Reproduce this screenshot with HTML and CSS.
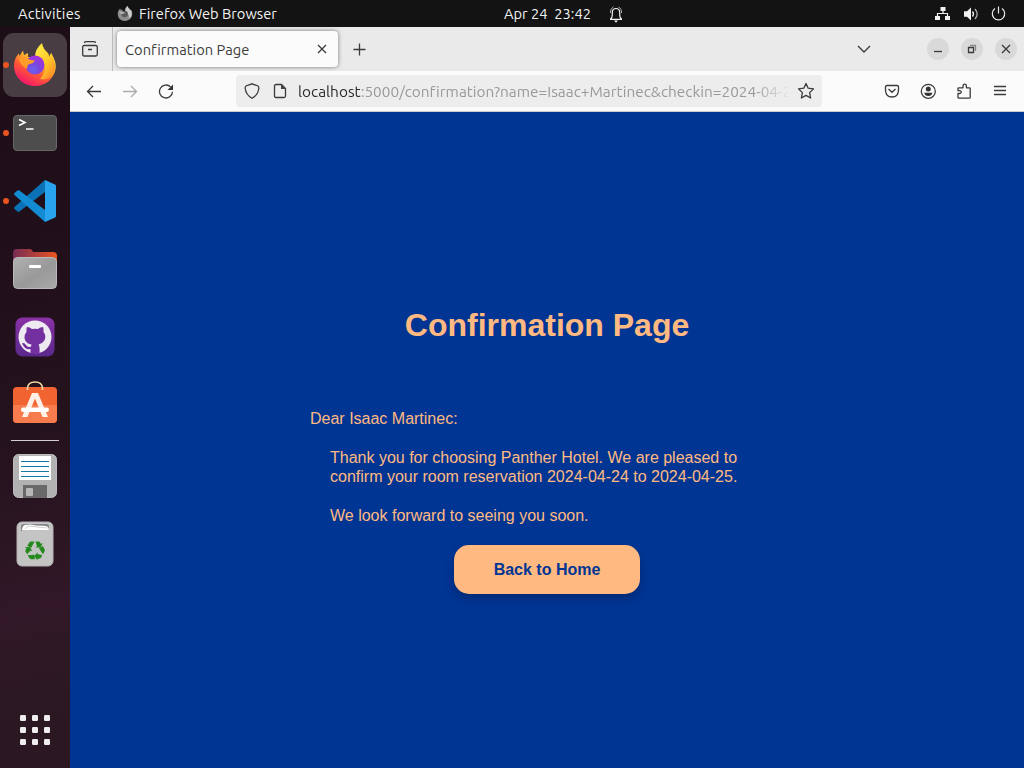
FILE: index.html
```
<!DOCTYPE html>
<html lang="en">
<head>
<meta charset="utf-8">
<title>Confirmation Page</title>
<link rel="stylesheet" href="styles.css">
</head>
<body>
<div class="desktop">
  <header class="topbar">
    <div class="top-left">
      <span class="activities">Activities</span>
      <svg class="app-icon" width="16" height="16" viewBox="0 0 42 44"><path d="M21 41C9 41 1 33 1 22C1 16 3 11 8 7L9 12L14 9L14 14H21C21 7 23 3 28 0C29 5 34 7 36 11L38 10C46 25 37 41 21 41Z" fill="#8d8d8d"/><path d="M22 13Q22 4 28 0Q29 5 34 9L38 13Q43 28 33 34Q33 23 22 13Z" fill="#ccc"/><circle cx="20" cy="22" r="9" fill="#5b5b5b"/><path d="M5 17Q12 14 21 18Q18 22 14 22Q10 23 5 17" fill="#b5b5b5"/></svg>
      <span class="app-name">Firefox Web Browser</span>
    </div>
    <div class="clock"><span class="date">Apr 24&nbsp; 23:42</span>
      <svg width="16" height="18" viewBox="0 0 16 18" fill="none" stroke="#f2f2f2"><path stroke-width="1.2" d="M2 14.300H14M2.500 14Q4.300 12.500 4.300 10V7.500Q4.500 3.500 8 3.500Q11.500 3.500 11.700 7.500V10Q11.700 12.500 13.500 14"/><path stroke="#bbb" d="M2.300 8Q2.300 3.500 5.500 1.800M13.700 8Q13.700 3.500 10.500 1.800"/><path d="M6 15.500H10L8 17.800Z" fill="#f2f2f2" stroke="none"/></svg>
    </div>
    <div class="system">
      <svg width="16" height="16" viewBox="0 0 16 16"><path d="M5.500 1H10.500V5H5.500ZM0 10H5V14H0ZM10 10H15V14H10Z" fill="#f2f2f2"/><path d="M8 5V7.500M2.500 10V7.500H12.500V10" fill="none" stroke="#f2f2f2" stroke-width="1.2"/></svg>
      <svg width="16" height="16" viewBox="0 0 16 16"><path d="M1 5.300H4L8 1.500V14.500L4 10.800H1Z" fill="#f2f2f2"/><path d="M9.500 5.500Q11.500 8 9.500 10.500" fill="none" stroke="#f2f2f2" stroke-width="1.3"/><path d="M12 3Q16.300 8 12 13" fill="none" stroke="#aaa" stroke-width="1.3"/></svg>
      <svg width="16" height="16" viewBox="0 0 16 16" fill="none" stroke="#e8e8e8" stroke-width="1.2"><path d="M4 2.600A6.200 6.200 0 1 0 11 2.600M7.500 .5V7.500"/></svg>
    </div>
  </header>

  <div class="workspace">
    <nav class="dock">
      <div class="tile active running">
        <svg width="44" height="46" viewBox="0 0 44 46">
          <defs>
            <linearGradient id="fox" x1=".85" y1=".05" x2=".25" y2=".95"><stop offset="0" stop-color="#fff44f"/><stop offset=".35" stop-color="#ffb52b"/><stop offset=".62" stop-color="#ff5a35"/><stop offset="1" stop-color="#f5156c"/></linearGradient>
            <linearGradient id="tail" x1="0" y1="0" x2=".8" y2="1"><stop offset="0" stop-color="#fff34e"/><stop offset=".6" stop-color="#ffc928"/><stop offset="1" stop-color="#ff8a2a"/></linearGradient>
            <radialGradient id="globe" cx=".4" cy=".75" r=".7"><stop offset="0" stop-color="#6b62f0"/><stop offset=".5" stop-color="#7a45dc"/><stop offset="1" stop-color="#a433dc"/></radialGradient>
          </defs>
          <path d="M22 44C10 44 1 35 1 23.500C1 18 3 14 6 11.500L6.500 14L10 8.500L11 13L15 11V15L24 15L36 16L38 11Q43 19 42.800 25C42 36 33 44 22 44Z" fill="url(#fox)"/>
          <path d="M22 15Q22 7 29 1Q30 7 35 11L37 15L38 11Q45 24 40 32Q35 39 27 37Q35 28 30 20Q27 15 22 15Z" fill="url(#tail)"/>
          <circle cx="22" cy="23" r="9.500" fill="url(#globe)"/>
          <path d="M6 17Q9 13.500 14 16Q17 18.500 22 18.500Q20 22 16 22Q14 23.500 14 27Q7 23 6 17Z" fill="#ff9b29"/>
        </svg>
      </div>
      <div class="tile running">
        <svg width="46" height="38" viewBox="0 0 46 38"><rect x="1.500" y="1.500" width="43" height="35" rx="3.500" fill="#4d4d4d" stroke="#686868"/><path d="M7 5.500L13 8.500L7 11.500M14 15H21.500" fill="none" stroke="#fff" stroke-width="1.600"/></svg>
      </div>
      <div class="tile running">
        <svg width="44" height="44" viewBox="0 0 44 44"><path d="M1.500 28Q.5 29 1.500 30L4.500 32.500Q5.500 33 6.500 32.500L32 13V1Z" fill="#0a72b5"/><path d="M1.500 16Q.5 15 1.500 14L4.500 11.500Q5.500 11 6.500 11.500L32 31V43Z" fill="#138bd2"/><path d="M32 1L42 5.500Q43 6 43 7V37Q43 38 42 38.500L32 43Z" fill="#28a3ee"/></svg>
      </div>
      <div class="tile">
        <svg width="46" height="42" viewBox="0 0 46 42">
          <defs><linearGradient id="folder"><stop stop-color="#762b55"/><stop offset="1" stop-color="#e95420"/></linearGradient><linearGradient id="metal" x2="1" y2="1"><stop stop-color="#b0b0b0"/><stop offset=".55" stop-color="#999"/><stop offset="1" stop-color="#a9a9a9"/></linearGradient></defs>
          <path d="M1 20V5Q1 1 5 1H18Q20 1 21 4H41Q45 4 45 8V20Z" fill="url(#folder)"/><rect x="1.500" y="9.500" width="43" height="31" rx="4" fill="url(#metal)" stroke="#b9b9b9"/><rect x="17" y="17" width="12" height="3" rx="1" fill="#fff"/></svg>
      </div>
      <div class="tile">
        <svg width="40" height="40" viewBox="0 0 40 40"><defs><linearGradient id="hub" x2="0" y2="1"><stop stop-color="#8a31a7"/><stop offset="1" stop-color="#5a288a"/></linearGradient></defs><rect x=".5" y=".5" width="39" height="39" rx="7" fill="url(#hub)"/><circle cx="20" cy="20" r="16.500" fill="#eeeaf2"/><path d="M12 10Q15 10 17 12Q20 11.300 23 12Q25 10 28 10Q29 12 28.500 15Q32 19 29 24Q27 27 23.500 27.500Q25 29 24.500 37H15.500V32Q10 33 8 28Q6 26 8 26Q10 26 11 28Q13 31 16 29.500L16.500 27.500Q12 27 10 23Q8.500 18 11.500 15Q11 12 12 10Z" fill="#7430a0"/></svg>
      </div>
      <div class="tile store">
        <svg width="46" height="44" viewBox="0 0 46 44"><rect x="1" y="7" width="44" height="36" rx="4" fill="#f26332"/><path d="M1 25H45V39Q45 43 41 43H5Q1 43 1 39Z" fill="#f67b4d"/><path d="M15.500 10V8Q16 2 23 2Q30 2 30.500 8V10" fill="none" stroke="#f6d9a4" stroke-width="1.600"/><path d="M20 13H26L36 37H30.500L23 18.500L15.500 37H10Z" fill="#fff0e7"/><rect x="9" y="27.500" width="28" height="4.500" rx="2.200" fill="#fff"/></svg>
      </div>
      <div class="divider"></div>
      <div class="tile">
        <svg width="46" height="46" viewBox="0 0 46 46"><rect x="1.500" y="1.500" width="43" height="43" rx="5" fill="#b2b2b2" stroke="#bcbcbc"/><path d="M7 3H39V27H7Z" fill="#fff"/><path d="M9 8.500H37M9 13.500H37M9 18.500H37M9 23.500H37" stroke="#1278a5"/><path d="M11 32H35V45H11Z" fill="#696969"/><rect x="14" y="35" width="7" height="8" rx="1" fill="#b7b7b7"/></svg>
      </div>
      <div class="tile">
        <svg width="38" height="46" viewBox="0 0 38 46"><rect x="1" y="1" width="36" height="44" rx="5" fill="#c4c4c4" stroke="#b2b2b2"/><path d="M5 10V5Q5 3 7 3H31Q33 3 33 5V10Z" fill="#888"/><path d="M6 9.500Q6 5 9 4L14 3.500L20 4.500L30 5Q33 6 33 9.500Z" fill="#fff"/><path d="M9 8L12 5L31 7" fill="none" stroke="#bbb" stroke-width=".7"/>
        <g fill="#25891f"><g id="arrow"><path d="M15.200 20.500H18.500L15.300 26.800L11.300 24.700L13.300 21.500Q14 20.500 15.200 20.500Z"/><path d="M19.500 20.500H22.500Q23.700 20.500 24.300 21.700L25 23L26.800 22L24.500 26.700L19.300 26.300L21 25.300Z"/></g><use href="#arrow" transform="rotate(120 19 29.300)"/><use href="#arrow" transform="rotate(240 19 29.300)"/></g></svg>
      </div>
      <div class="tile app-grid">
        <svg width="30" height="30" viewBox="0 0 30 30" fill="#f0eeee"><rect width="6" height="6" rx="1.300"/><rect x="12" width="6" height="6" rx="1.300"/><rect x="24" width="6" height="6" rx="1.300"/><rect y="12" width="6" height="6" rx="1.300"/><rect x="12" y="12" width="6" height="6" rx="1.300"/><rect x="24" y="12" width="6" height="6" rx="1.300"/><rect y="24" width="6" height="6" rx="1.300"/><rect x="12" y="24" width="6" height="6" rx="1.300"/><rect x="24" y="24" width="6" height="6" rx="1.300"/></svg>
      </div>
    </nav>

    <main class="browser">
      <div class="tabbar">
        <div class="view"><svg class="line-icon" width="18" height="18" viewBox="0 0 18 18"><path d="M3.500 3Q3.500 1.700 4.700 1.700H13.300Q14.500 1.700 14.500 3M1.700 7Q1.700 5.500 3.200 5.500H14.800Q16.300 5.500 16.300 7V14.500Q16.300 16 14.800 16H3.200Q1.700 16 1.700 14.500ZM7 9.500H11"/></svg></div>
        <div class="tab"><span class="tab-title">Confirmation Page</span><svg class="line-icon" width="10" height="10" viewBox="0 0 10 10"><path d="M1 1L9 9M9 1L1 9"/></svg></div>
        <svg class="line-icon plus" width="13" height="13" viewBox="0 0 13 13"><path d="M6.500 .5V12.500M.5 6.500H12.500"/></svg>
        <svg class="line-icon chevron" width="14" height="8" viewBox="0 0 14 8"><path d="M1 1L7 7L13 1"/></svg>
        <div class="controls">
          <span class="control"><svg class="line-icon" width="10" height="10"><path d="M1 7.500H9"/></svg></span>
          <span class="control"><svg class="line-icon" width="10" height="10"><path d="M1.500 3.500H6.500V8.500H1.500Z"/><path d="M3 1.500H8.500V7" stroke="#888"/></svg></span>
          <span class="control"><svg class="line-icon" width="10" height="10"><path d="M1 1L9 9M9 1L1 9"/></svg></span>
        </div>
      </div>
      <div class="navbar">
        <div class="history">
          <svg class="line-icon" width="16" height="16" viewBox="0 0 16 16"><path d="M15 8.500H1.500M7 3L1.500 8.500L7 14"/></svg>
          <svg class="line-icon muted" width="16" height="16" viewBox="0 0 16 16"><path d="M1 8.500H14.500M9 3L14.500 8.500L9 14"/></svg>
          <svg class="line-icon" width="16" height="16" viewBox="0 0 16 16"><path d="M12.500 3.800A6.500 6.500 0 1 0 14.500 8.800"/><path d="M15 1.500V7H9.500Z" fill="#333" stroke="none"/></svg>
        </div>
        <div class="address">
          <svg class="line-icon" width="16" height="16" viewBox="0 0 16 16"><path d="M8 .8L14 3Q15 3.500 14.800 5.500Q14 12 8 15.300Q2 12 1.200 5.500Q1 3.500 2 3Z"/></svg>
          <svg class="line-icon page-icon" width="16" height="16" viewBox="0 0 16 16"><path d="M4 1.500H9.500L13.500 5.500V13Q13.500 14.500 12 14.500H4Q2.500 14.500 2.500 13V3Q2.500 1.500 4 1.500Z"/><path d="M9 1L14 6H9Z" fill="#444" stroke="none"/></svg>
          <span class="url"><span class="host">localhost</span><span class="path">:5000/confirmation?name=Isaac+Martinec&amp;checkin=2024-04-24</span></span>
          <svg class="line-icon" width="18" height="18" viewBox="0 0 18 18"><path stroke-linejoin="round" d="M9 1.500L11.200 6.200L16.500 6.900L12.600 10.600L13.600 16L9 13.400L4.400 16L5.400 10.600L1.500 6.900L6.800 6.200Z"/></svg>
        </div>
        <div class="tools">
          <svg class="line-icon" width="16" height="16" viewBox="0 0 16 16"><path d="M3 2.500H13Q14.500 2.500 14.500 4V7.500Q14 14 8 14Q2 14 1.500 7.500V4Q1.500 2.500 3 2.500ZM4.500 6L8 9.300L11.500 6"/></svg>
          <svg class="line-icon" width="16" height="16" viewBox="0 0 16 16"><circle cx="8.300" cy="8.300" r="7"/><circle cx="8.300" cy="6" r="2.500" fill="#333" stroke="none"/><path d="M4.300 9.800H12.300Q11.800 13 8.300 13Q4.800 13 4.300 9.800" fill="#333" stroke="none"/></svg>
          <svg class="line-icon" width="16" height="16" viewBox="0 0 16 16"><path stroke-linejoin="round" d="M2 10.500V14.500Q2 15.200 2.700 15.200H13.500Q14.200 15.200 14.200 14.500V5.500Q14.200 4.800 13.500 4.800H10.400V2.800Q10.200 1.200 8.700 1.200Q7.200 1.200 7 2.800V4.800H2.700Q2 4.800 2 5.500V7.700H3.700Q5.300 8 5.300 9.100Q5.300 10.200 3.700 10.500Z"/></svg>
          <svg class="line-icon" width="16" height="16" viewBox="0 0 16 16"><path d="M2 3.500H14M2 7.500H14M2 11.500H14"/></svg>
        </div>
      </div>
      <section class="page">
        <h1>Confirmation Page</h1>
        <div class="letter">
          <p>Dear Isaac Martinec:</p>
          <p class="indent">Thank you for choosing Panther Hotel. We are pleased to confirm your room reservation 2024-04-24 to 2024-04-25.</p>
          <p class="indent">We look forward to seeing you soon.</p>
        </div>
        <button class="home">Back to Home</button>
      </section>
    </main>
  </div>
</div>
</body>
</html>
```
FILE: styles.css
```
* { box-sizing: border-box; }
body { margin: 0; font-family: Ubuntu, "Noto Sans", sans-serif; font-size: 14.67px; font-variant-ligatures: none; }
svg { display: block; flex: none; }
.desktop { width: 1024px; height: 768px; display: flex; flex-direction: column; overflow: hidden; }

.topbar { height: 27px; flex: none; background: #131313; color: #f2f2f2; display: grid; grid-template-columns: 504px 1fr 89px; align-items: center; white-space: nowrap; }
.top-left { display: flex; align-items: center; padding-left: 18px; }
.activities { width: 99px; letter-spacing: 0.25px; }
.app-name { margin-left: 6px; }
.clock { display: flex; align-items: center; }
.date { width: 104px; }
.system { display: flex; gap: 12px; }

.workspace { flex: 1; min-height: 0; display: flex; }
.dock { width: 70px; flex: none; display: flex; flex-direction: column; align-items: center; gap: 4px; padding: 6px 0; background: linear-gradient(165deg, #1d0d17 0%, #24121d 55%, #321828 78%, #2c1822 88%, #2b1721 100%); }
.tile { position: relative; width: 64px; height: 64px; flex: none; display: flex; align-items: center; justify-content: center; border-radius: 11px; }
.active { background: #483d43; }
.running::before { content: ""; position: absolute; left: 0; top: 29px; width: 6px; height: 6px; border-radius: 50%; background: #e95420; }
.store { padding-bottom: 6px; }
.divider { width: 48px; height: 1px; flex: none; background: #d2cdd0; margin: -1px 0; }
.app-grid { margin-top: auto; }

.browser { flex: 1; min-width: 0; display: flex; flex-direction: column; }
.line-icon { fill: none; stroke: #3a3a3a; stroke-width: 1.3; }
.muted { stroke: #aaa; }
.tabbar { height: 44px; flex: none; background: #eaeaea; display: flex; align-items: center; color: #3d3d3d; }
.view { width: 43px; height: 44px; border-right: 1px solid #bbb; display: flex; align-items: center; padding-left: 11px; }
.tab { width: 221px; height: 36px; margin-left: 4px; padding: 0 11px 0 8px; border-radius: 4px; background: #fbfbfb; box-shadow: 0 0 4px rgba(0,0,0,.5); display: flex; align-items: center; justify-content: space-between; }
.tab-title { padding-top: 1px; letter-spacing: 0.05px; }
.plus { margin-left: 15px; }
.chevron { margin-left: auto; }
.controls { display: flex; gap: 12px; margin: 0 7px 0 56px; }
.control { width: 22px; height: 22px; border-radius: 50%; background: #d9d9d9; display: flex; align-items: center; justify-content: center; }

.navbar { height: 41px; flex: none; display: flex; align-items: center; background: #fbfbfb; border-bottom: 1px solid #ccc; }
.history { display: flex; gap: 20px; width: 166px; padding-left: 16px; }
.address { width: 586px; height: 32px; display: flex; align-items: center; padding: 0 7px 0 8px; border-radius: 4px; background: #ededed; }
.page-icon { margin-left: 12px; }
.url { flex: 1; min-width: 0; margin: 0 9px 0 10px; overflow: hidden; white-space: nowrap; font-size: 15.4px; color: #999; mask-image: linear-gradient(to right, #000 455px, transparent 493px); }
.host { color: #2b2b2b; }
.tools { display: flex; gap: 20px; margin-left: auto; padding-right: 16px; }

.page { flex: 1; display: flex; flex-direction: column; align-items: center; padding-top: 195px; background: #003594; color: #ffb981; font-family: "Liberation Sans", Arial, sans-serif; font-size: 16px; line-height: 19px; }
.page h1 { margin: 0 0 65px; font-size: 32px; line-height: 37px; }
.letter { width: 474px; }
.letter p { margin: 0 0 20px; }
.letter .indent { padding: 0 20px; }
.home { width: 186px; height: 49px; border: 0; border-radius: 15px; background: #ffb981; color: #003594; font: bold 16px "Liberation Sans", Arial, sans-serif; box-shadow: 0 5px 10px rgba(0,0,0,.22); }
```
